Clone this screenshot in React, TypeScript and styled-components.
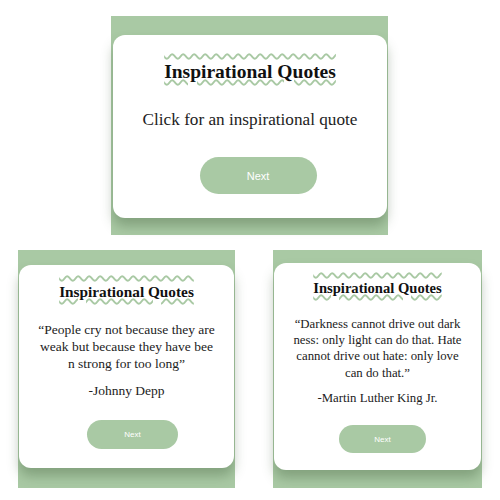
import { Fragment } from "react";
import styled, { createGlobalStyle } from "styled-components";

const GREEN = "#a9c9a4";

const GlobalStyle = createGlobalStyle`
  html, body {
    margin: 0;
    padding: 0;
    background: #ffffff;
  }
  body {
    font-family: "Liberation Serif", "Times New Roman", serif;
  }
`;

type Metrics = {
  frame: [number, number, number, number];
  width: number;
  height: number;
  titleSize: number;
  titleTop: number;
  textSize: number;
  lineHeight: number;
  textTop: number;
  authorTop: number;
  btnTop: number;
  btnW: number;
  btnH: number;
  btnShift: number;
  btnFont: number;
};

const big: Metrics = {
  frame: [19, 1, 17, 2],
  width: 274,
  height: 183,
  titleSize: 19.5,
  titleTop: 26,
  textSize: 17.2,
  lineHeight: 22,
  textTop: 26,
  authorTop: 0,
  btnTop: 26,
  btnW: 117,
  btnH: 37,
  btnShift: 16,
  btnFont: 11,
};

const johnny: Metrics = {
  frame: [15, 1, 17, 1],
  width: 215,
  height: 203,
  titleSize: 15.3,
  titleTop: 18,
  textSize: 13.5,
  lineHeight: 17,
  textTop: 20,
  authorTop: 10,
  btnTop: 21,
  btnW: 91,
  btnH: 29,
  btnShift: 12,
  btnFont: 8,
};

const martin: Metrics = {
  frame: [13, 1, 18, 1],
  width: 207,
  height: 207,
  titleSize: 14.6,
  titleTop: 17,
  textSize: 12.8,
  lineHeight: 16.3,
  textTop: 19,
  authorTop: 9,
  btnTop: 19,
  btnW: 87,
  btnH: 28,
  btnShift: 10,
  btnFont: 8,
};

const Page = styled.div`
  display: flex;
  flex-direction: column;
  gap: 15px;
  padding-top: 16px;
  width: 500px;
`;

const TopRow = styled.div`
  display: flex;
  padding-left: 111px;
`;

const BottomRow = styled.div`
  display: flex;
  gap: 38px;
  padding-left: 18px;
`;

const Frame = styled.div<{ $m: Metrics }>`
  background: ${GREEN};
  padding: ${({ $m }) => $m.frame.map((v) => `${v}px`).join(" ")};
`;

const Card = styled.div<{ $m: Metrics }>`
  box-sizing: border-box;
  width: ${({ $m }) => $m.width}px;
  height: ${({ $m }) => $m.height}px;
  background: #ffffff;
  border-radius: 12px;
  box-shadow: 0 8px 12px rgba(60, 90, 55, 0.35);
  display: flex;
  flex-direction: column;
  align-items: center;
  text-align: center;
`;

const Title = styled.h1<{ $m: Metrics }>`
  margin: ${({ $m }) => $m.titleTop}px 0 0;
  font-size: ${({ $m }) => $m.titleSize}px;
  line-height: 1.15;
  font-weight: bold;
  color: #111;
  text-decoration: underline overline wavy ${GREEN};
  text-decoration-thickness: 1.5px;
`;

const Quote = styled.p<{ $m: Metrics }>`
  margin: ${({ $m }) => $m.textTop}px 0 0;
  font-size: ${({ $m }) => $m.textSize}px;
  line-height: ${({ $m }) => $m.lineHeight}px;
  color: #222;
  white-space: nowrap;
`;

const Author = styled.p<{ $m: Metrics }>`
  margin: ${({ $m }) => $m.authorTop}px 0 0;
  font-size: ${({ $m }) => $m.textSize}px;
  line-height: ${({ $m }) => $m.lineHeight}px;
  color: #222;
`;

const NextButton = styled.button<{ $m: Metrics }>`
  margin-top: ${({ $m }) => $m.btnTop}px;
  margin-left: ${({ $m }) => $m.btnShift}px;
  width: ${({ $m }) => $m.btnW}px;
  height: ${({ $m }) => $m.btnH}px;
  border: none;
  border-radius: ${({ $m }) => $m.btnH / 2}px;
  background: ${GREEN};
  color: #ffffff;
  font-family: "Liberation Sans", Arial, sans-serif;
  font-size: ${({ $m }) => $m.btnFont}px;
  padding: 0;
  cursor: pointer;
`;

const QuoteCard = ({
  m,
  lines,
  author,
}: {
  m: Metrics;
  lines: string[];
  author?: string;
}) => (
  <Frame $m={m}>
    <Card $m={m}>
      <Title $m={m}>Inspirational Quotes</Title>
      <Quote $m={m}>
        {lines.map((line, i) => (
          <Fragment key={i}>
            {i > 0 && <br />}
            {line}
          </Fragment>
        ))}
      </Quote>
      {author && <Author $m={m}>{author}</Author>}
      <NextButton $m={m}>Next</NextButton>
    </Card>
  </Frame>
);

export default function App() {
  return (
    <>
      <GlobalStyle />
      <Page>
        <TopRow>
          <QuoteCard m={big} lines={["Click for an inspirational quote"]} />
        </TopRow>
        <BottomRow>
          <QuoteCard
            m={johnny}
            lines={[
              "“People cry not because they are",
              "weak but because they have bee",
              "n strong for too long”",
            ]}
            author="-Johnny Depp"
          />
          <QuoteCard
            m={martin}
            lines={[
              "“Darkness cannot drive out dark",
              "ness: only light can do that. Hate",
              "cannot drive out hate: only love",
              "can do that.”",
            ]}
            author="-Martin Luther King Jr."
          />
        </BottomRow>
      </Page>
    </>
  );
}
